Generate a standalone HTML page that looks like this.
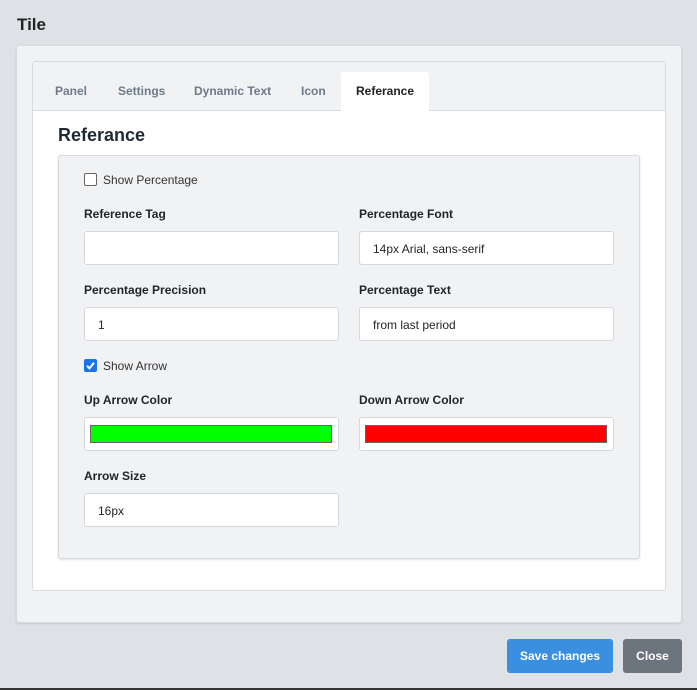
<!DOCTYPE html>
<html><head><meta charset="utf-8"><style>
*{box-sizing:border-box;margin:0;padding:0}
body{width:697px;height:690px;background:#dee1e6;font-family:"Liberation Sans",Arial,sans-serif;position:relative;overflow:hidden;color:#212529}
.a{position:absolute}
.title{left:17px;top:15px;font-size:17px;font-weight:bold;color:#222}
.outer{left:16px;top:45px;width:666px;height:578px;background:#f1f2f4;border:1px solid #d6d9dd;border-radius:3px;box-shadow:0 1px 2px rgba(0,0,0,.1)}
.card{left:32px;top:61px;width:634px;height:530px;background:#fff;border:1px solid #d8dbdf;border-radius:3px}
.tabs{left:33px;top:62px;width:632px;height:49px;background:#f1f2f4;border-bottom:1px solid #d8dbdf}
.tab{top:84px;font-size:12px;font-weight:bold;color:#6c7a8a}
.active{left:341px;top:72px;width:88px;height:39px;background:#fff;border-radius:3px 3px 0 0}
.h{left:58px;top:125px;font-size:18px;font-weight:bold;color:#1f2a37}
.inner{left:58px;top:155px;width:582px;height:404px;background:#f1f2f4;border:1px solid #d6d9dd;border-radius:3px;box-shadow:0 1px 2px rgba(0,0,0,.12)}
.lbl{font-size:12px;font-weight:bold;color:#212529}
.inp{width:255px;height:34px;background:#fff;border:1px solid #d4d7db;border-radius:3px;font-size:12px;padding:10px 0 0 13px;color:#212529}
.cb{font-size:12px;color:#333}
.box{left:84px;width:13px;height:13px;border:1px solid #666;border-radius:2px;background:#fff}
.btn{top:639px;height:34px;border-radius:3px;color:#fff;font-size:12px;font-weight:bold;text-align:center;line-height:34px}
</style></head><body>
<div class="a title">Tile</div>
<div class="a outer"></div>
<div class="a card"></div>
<div class="a tabs"></div>
<div class="a active"></div>
<div class="a tab" style="left:55px">Panel</div>
<div class="a tab" style="left:118px">Settings</div>
<div class="a tab" style="left:194px">Dynamic Text</div>
<div class="a tab" style="left:301px">Icon</div>
<div class="a tab" style="left:356px;color:#222">Referance</div>
<div class="a h">Referance</div>
<div class="a inner"></div>

<div class="a box" style="top:173px"></div>
<div class="a cb" style="left:103px;top:173px">Show Percentage</div>

<div class="a lbl" style="left:84px;top:207px">Reference Tag</div>
<div class="a lbl" style="left:359px;top:207px">Percentage Font</div>
<div class="a inp" style="left:84px;top:231px"></div>
<div class="a inp" style="left:359px;top:231px">14px Arial, sans-serif</div>

<div class="a lbl" style="left:84px;top:283px">Percentage Precision</div>
<div class="a lbl" style="left:359px;top:283px">Percentage Text</div>
<div class="a inp" style="left:84px;top:307px">1</div>
<div class="a inp" style="left:359px;top:307px">from last period</div>

<div class="a" style="left:84px;top:359px;width:13px;height:13px;background:#1a73e8;border-radius:2px">
<svg width="13" height="13" viewBox="0 0 13 13"><path d="M3 6.8l2.5 2.6L10 3.8" stroke="#fff" stroke-width="2" fill="none"/></svg></div>
<div class="a cb" style="left:103px;top:359px">Show Arrow</div>

<div class="a lbl" style="left:84px;top:393px">Up Arrow Color</div>
<div class="a lbl" style="left:359px;top:393px">Down Arrow Color</div>
<div class="a inp" style="left:84px;top:417px;padding:0"><div class="a" style="left:5px;top:7px;width:242px;height:18px;background:#00ff00;border:1px solid #666"></div></div>
<div class="a inp" style="left:359px;top:417px;padding:0"><div class="a" style="left:5px;top:7px;width:242px;height:18px;background:#ff0000;border:1px solid #666"></div></div>

<div class="a lbl" style="left:84px;top:469px">Arrow Size</div>
<div class="a inp" style="left:84px;top:493px">16px</div>

<div class="a btn" style="left:507px;width:106px;background:#3a8fe0">Save changes</div>
<div class="a btn" style="left:623px;width:59px;background:#6c757d">Close</div>
<div class="a" style="left:0;top:688px;width:697px;height:2px;background:#333"></div>
</body></html>
